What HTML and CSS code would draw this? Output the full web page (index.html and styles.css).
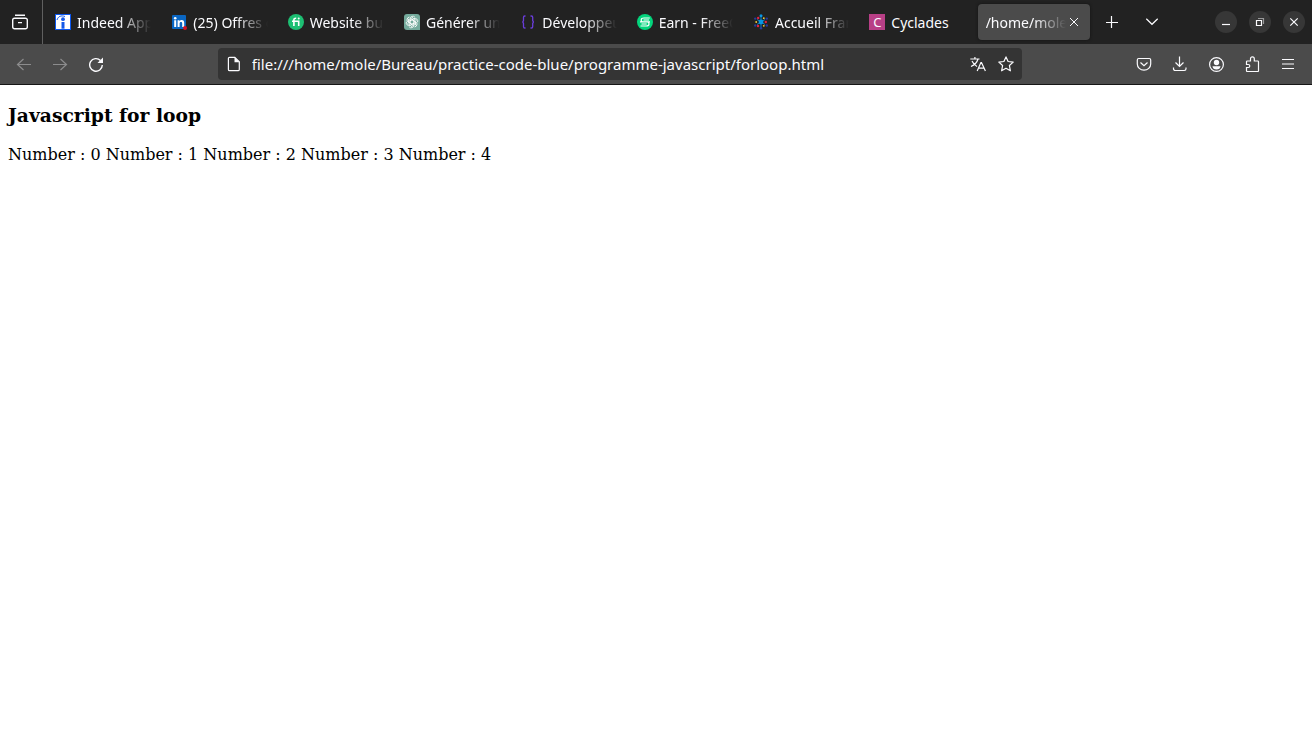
FILE: index.html
```html
<!DOCTYPE html>
<html lang="fr">
<head>
<meta charset="utf-8">
<meta name="viewport" content="width=device-width, initial-scale=1">
<title>forloop.html</title>
<link rel="stylesheet" href="styles.css">
</head>
<body>
<header class="browser">
  <div class="titlebar">
    <button class="view-button" aria-label="Firefox View">
      <svg class="icon bold" viewBox="0 0 16 16"><path d="M3 1.300h10M2.500 4.200h11a1.800 1.800 0 0 1 1.800 1.800v7a1.800 1.800 0 0 1-1.800 1.800h-11A1.800 1.800 0 0 1 .7 13V6a1.800 1.800 0 0 1 1.800-1.800zM6 8.600h4"/></svg>
    </button>
    <nav class="tabs" aria-label="Onglets">
      <button class="tab">
        <svg class="favicon" viewBox="0 0 16 16"><path fill="#0b57f0" d="M0 0h16v16H0z"/><path fill="#fff" d="M1 1h14v14H1z"/><circle cx="8" cy="5.200" r="1.900" fill="#1458e8"/><path fill="#1458e8" d="M6.500 8h3v6.700h-3z"/><path d="M2 6c1-3.500 4-5 8-3.500" fill="none" stroke="#1458e8" stroke-width="1"/></svg>
        <span class="label">Indeed Apply</span>
      </button>
      <button class="tab">
        <svg class="favicon" viewBox="0 0 16 16"><rect x="1" y="1" width="14" height="14" rx="1" fill="#0a66c2"/><circle cx="4.200" cy="4.200" r="1.300" fill="#fff"/><path fill="#fff" d="M3.200 6.300h2V13h-2zM6.600 6.300h1.900v1c.5-.8 1.200-1.200 2.200-1.200 1.900 0 2.500 1.200 2.500 3V13h-2V9.600c0-1-.2-1.700-1.200-1.700s-1.400.7-1.400 1.700V13h-2z"/><circle cx="14" cy="14" r="2" fill="#d11124"/></svg>
        <span class="label">(25) Offres d’emploi</span>
      </button>
      <button class="tab">
        <svg class="favicon" viewBox="0 0 16 16"><circle cx="8" cy="8" r="8" fill="#1dbf73"/><path d="M4 7.200h6.700V12M5.900 12V6.100c0-1.300.7-1.900 2.300-1.800" fill="none" stroke="#fff" stroke-width="1.600"/><circle cx="10.700" cy="4.600" r="1" fill="#fff"/></svg>
        <span class="label">Website builder</span>
      </button>
      <button class="tab">
        <svg class="favicon" viewBox="0 0 16 16"><path fill="#74aa9c" d="M3 0h10a3 3 0 0 1 3 3v13H3a3 3 0 0 1-3-3V3a3 3 0 0 1 3-3z"/><g fill="none" stroke="#fff" stroke-width=".8"><path id="petal" d="M6 9.200V4.800a2.800 2.800 0 0 1 5-1.500M6 6.800l3.500-2 3 1.700"/><use href="#petal" transform="rotate(60 8 8)"/><use href="#petal" transform="rotate(120 8 8)"/><use href="#petal" transform="rotate(180 8 8)"/><use href="#petal" transform="rotate(240 8 8)"/><use href="#petal" transform="rotate(300 8 8)"/></g></svg>
        <span class="label">Générer une image</span>
      </button>
      <button class="tab">
        <svg class="favicon" viewBox="0 0 16 16"><path d="M5.500 2H4.800Q3.500 2 3.500 3.300v3.200L2.800 8l.7 1.500v3.200Q3.500 14 4.800 14h.7M10.500 2h.9q1.300 0 1.300 1.300v3.200l.7 1.500-.7 1.500v3.200q0 1.300-1.300 1.300h-.9" fill="none" stroke="#6a3ddb" stroke-width="1.300"/></svg>
        <span class="label">Développeur web</span>
      </button>
      <button class="tab">
        <svg class="favicon" viewBox="0 0 16 16"><circle cx="8" cy="8" r="8" fill="#03d47c"/><path d="M12.800 4H7Q4.200 4 4.200 6T6.500 7.900h3.700Q12 7.900 12 9.900T9.300 12H3.500M6.500 6h5.500M3 7.900h3M10 7.900h3M4.500 10h5.200" fill="none" stroke="#fff" stroke-width="1.200"/></svg>
        <span class="label">Earn - FreeCash</span>
      </button>
      <button class="tab">
        <svg class="favicon" viewBox="0 0 16 16"><path d="M8 2v12M4 5.500l8 5M4 10.500l8-5" stroke="#0797e5" stroke-width=".8"/><circle cx="8" cy="8" r="2.400" fill="#0797e5"/><g fill="#263b9c"><circle cx="2.200" cy="4.600" r="1.200"/><circle cx="13.800" cy="4.600" r="1.200"/><circle cx="2.200" cy="11.500" r="1.200"/><circle cx="13.800" cy="11.500" r="1.200"/></g><circle cx="8" cy="1.800" r="1.500" fill="#0797e5"/><circle cx="8" cy="14.200" r="1.200" fill="#263b9c"/><g fill="#e5223f"><circle cx="5.200" cy="4" r="1.200"/><circle cx="12.800" cy="8" r="1.200"/><circle cx="5" cy="12" r="1.200"/></g><g fill="#f2cf3b"><circle cx="10.800" cy="4.200" r=".9"/><circle cx="3.200" cy="8" r=".9"/><circle cx="10.800" cy="11.800" r=".9"/></g></svg>
        <span class="label">Accueil France</span>
      </button>
      <button class="tab">
        <span class="favicon letter">C</span>
        <span class="label">Cyclades</span>
      </button>
      <div class="tab active">
        <button class="label">/home/mole/Bureau</button>
        <button class="close" aria-label="Fermer l’onglet"><svg viewBox="0 0 10 10"><path d="M1 1l8 8M9 1L1 9"/></svg></button>
      </div>
    </nav>
    <div class="tab-tools">
      <button class="tool" aria-label="Nouvel onglet"><svg class="icon" viewBox="0 0 16 16"><path d="M7.500 2v12M2 8.500h12"/></svg></button>
      <button class="tool" aria-label="Lister les onglets"><svg class="icon" viewBox="0 0 16 16"><path d="M2.300 4.800L8 10.300l5.700-5.500"/></svg></button>
    </div>
    <div class="window-controls">
      <button aria-label="Réduire"><svg class="icon" viewBox="0 0 16 16"><path d="M4 10.500h8"/></svg></button>
      <button aria-label="Restaurer"><svg class="icon" viewBox="0 0 16 16"><path d="M4.500 6.500h5v5h-5z"/><path d="M6 4.500h5.500V10" opacity=".5"/></svg></button>
      <button aria-label="Fermer"><svg class="icon" viewBox="0 0 16 16"><path d="M4.300 4.300l7.400 7.400M11.700 4.300l-7.400 7.400"/></svg></button>
    </div>
  </div>

  <div class="toolbar">
    <div class="nav-buttons">
      <button class="tool" aria-label="Précédent" disabled><svg class="icon" viewBox="0 0 16 16"><path d="M15 8.500H1.500M7.500 3L1.500 8.500l6 5.500"/></svg></button>
      <button class="tool" aria-label="Suivant" disabled><svg class="icon" viewBox="0 0 16 16"><path d="M1 8.500h13.500M8.500 3l6 5.500-6 5.500"/></svg></button>
      <button class="tool" aria-label="Actualiser"><svg class="icon bold" viewBox="0 0 16 16"><path d="M14.300 9A6.300 6.300 0 1 1 12.500 4.500"/><path class="solid" d="M15 1.500V7H9.500z"/></svg></button>
    </div>
    <div class="spring"></div>
    <div class="urlbar">
      <svg class="icon" viewBox="0 0 16 16"><path d="M3.700 1.300h5.100l4.500 4.500v7.600a1.300 1.300 0 0 1-1.300 1.300H3.700a1.300 1.300 0 0 1-1.300-1.300V2.600a1.300 1.300 0 0 1 1.300-1.300z"/><path class="solid" d="M8.500 1v5.200h5z"/></svg>
      <input class="address" type="text" aria-label="Adresse" value="file:///home/mole/Bureau/practice-code-blue/programme-javascript/forloop.html">
      <button class="url-tool" aria-label="Traduire la page"><svg class="icon" viewBox="0 0 16 16"><path d="M.3 3h9.200M4.900 1v2M1 10.500C4.500 9 7 6.500 8 3M2 5c1 2.200 2.500 4 5 5.500M7.200 15l3.700-8.500h.6l3.900 8.500M8.500 12.200h5.500"/></svg></button>
      <button class="url-tool" aria-label="Marquer cette page"><svg class="icon" viewBox="0 0 16 16"><path d="M8 .9l2.100 4.600 5.100.6-3.800 3.400 1 5.300L8 12.300l-4.400 2.500 1-5.300L.8 6.100l5.100-.6z" stroke-linejoin="round"/></svg></button>
    </div>
    <div class="spring"></div>
    <div class="actions">
      <button class="tool" aria-label="Pocket"><svg class="icon" viewBox="0 0 16 16"><path d="M2.700 2.500h10.600a1.400 1.400 0 0 1 1.400 1.400V8a6.700 6.200 0 0 1-13.400 0V3.900a1.400 1.400 0 0 1 1.400-1.400z"/><path d="M4.500 6.500L8 9.800l3.500-3.300"/></svg></button>
      <button class="tool" aria-label="Téléchargements"><svg class="icon" viewBox="0 0 16 16"><path d="M7.500 .5v10M3.500 6.500l4 4 4-4M1.500 11.500v1.300a1.700 1.700 0 0 0 1.700 1.700h9.100a1.700 1.700 0 0 0 1.700-1.700v-1.300"/></svg></button>
      <button class="tool" aria-label="Compte"><svg class="icon" viewBox="0 0 16 16"><circle cx="8.500" cy="8.500" r="6.900"/><circle class="solid" cx="8.500" cy="6.500" r="2.700"/><path class="solid" d="M4.500 10.200h8c0 2-1.800 3.300-4 3.300s-4-1.300-4-3.300z"/></svg></button>
      <button class="tool" aria-label="Extensions"><svg class="icon" viewBox="0 0 16 16"><path d="M2.500 8.500V5.800q0-.8.800-.8h3.200V2.700a1.900 1.900 0 0 1 3.800 0V5h3.400q.8 0 .8.800v8.900q0 .8-.8.8H3.300q-.8 0-.8-.8v-3.200h1.800a1.500 1.500 0 0 0 0-3z"/></svg></button>
      <button class="tool" aria-label="Menu"><svg class="icon" viewBox="0 0 16 16"><path d="M2 3.500h12M2 8h12M2 12.500h12"/></svg></button>
    </div>
  </div>
</header>
<main class="page">
  <h3>Javascript for loop</h3>
  <div>Number : 0 Number : 1 Number : 2 Number : 3 Number : 4</div>
</main>
</body>
</html>
```
FILE: styles.css
```css
* { box-sizing: border-box; }

body {
  margin: 0;
  background: #fff;
  color: #000;
  font-family: "DejaVu Serif", serif;
  font-size: 16px;
}

button, input {
  margin: 0;
  padding: 0;
  border: 0;
  background: none;
  color: inherit;
  font: inherit;
}

.browser {
  color: #fbfbfe;
  font-family: "Noto Sans", sans-serif;
  font-size: 14px;
  line-height: 20px;
}

.icon {
  display: block;
  flex: none;
  width: 16px;
  height: 16px;
  fill: none;
  stroke: currentColor;
  stroke-width: 1.2;
}

.icon.bold { stroke-width: 1.4; }
.icon .solid { fill: currentColor; stroke: none; }

.titlebar {
  display: flex;
  align-items: center;
  height: 44px;
  padding-right: 7px;
  background: #222;
}

.view-button {
  align-self: stretch;
  flex: none;
  width: 43px;
  padding-left: 12px;
  border-right: 1px solid #606060;
}

.tabs {
  display: flex;
  flex: 1;
  gap: 4px;
  min-width: 0;
  padding: 0 2px 0 4px;
}

.tab {
  display: flex;
  flex: 1 1 0;
  align-items: center;
  gap: 6px;
  min-width: 0;
  height: 36px;
  padding: 0 8px;
  border-radius: 4px;
  text-align: left;
}

.tab.active {
  gap: 0;
  background: #4b4b4b;
  box-shadow: 0 0 3px #111;
}

.favicon {
  flex: none;
  width: 16px;
  height: 16px;
}

.letter {
  background: #b83f86;
  font-size: 13px;
  line-height: 16px;
  text-align: center;
}

.label {
  flex: 1;
  min-width: 0;
  padding-top: 2px;
  overflow: hidden;
  white-space: nowrap;
  text-align: left;
  mask-image: linear-gradient(to left, transparent, #000 32px);
}

.letter + .label { mask-image: none; }

.close {
  flex: none;
  width: 16px;
  height: 16px;
  padding: 3px;
}

.close svg {
  display: block;
  width: 10px;
  height: 10px;
  fill: none;
  stroke: currentColor;
}

.tab-tools { display: flex; }

.tool {
  display: flex;
  align-items: center;
  justify-content: center;
  width: 36px;
  height: 32px;
}

.tab-tools .tool { width: 40px; }
.tool:disabled { color: #8c8c8d; }

.window-controls {
  display: flex;
  gap: 12px;
  margin-left: 43px;
}

.window-controls button {
  display: flex;
  align-items: center;
  justify-content: center;
  width: 22px;
  height: 22px;
  border-radius: 50%;
  background: #373737;
}

.toolbar {
  display: flex;
  align-items: center;
  height: 41px;
  padding: 0 6px;
  border-bottom: 1px solid #161616;
  background: #4b4b4b;
}

.nav-buttons, .actions { display: flex; }

.spring { flex: 104 1 0; }

.urlbar {
  display: flex;
  flex: 796 1 0;
  align-items: center;
  height: 32px;
  padding: 0 2px 0 8px;
  border-radius: 4px;
  background: #343434;
}

.address {
  flex: 1;
  min-width: 0;
  height: 32px;
  margin-left: 10px;
  font-size: 15px;
}

.url-tool {
  display: flex;
  align-items: center;
  justify-content: center;
  width: 28px;
  height: 28px;
}

.page {
  display: flow-root;
  padding: 0 8px;
}

.page h3 { margin: 19px 0; }
```
